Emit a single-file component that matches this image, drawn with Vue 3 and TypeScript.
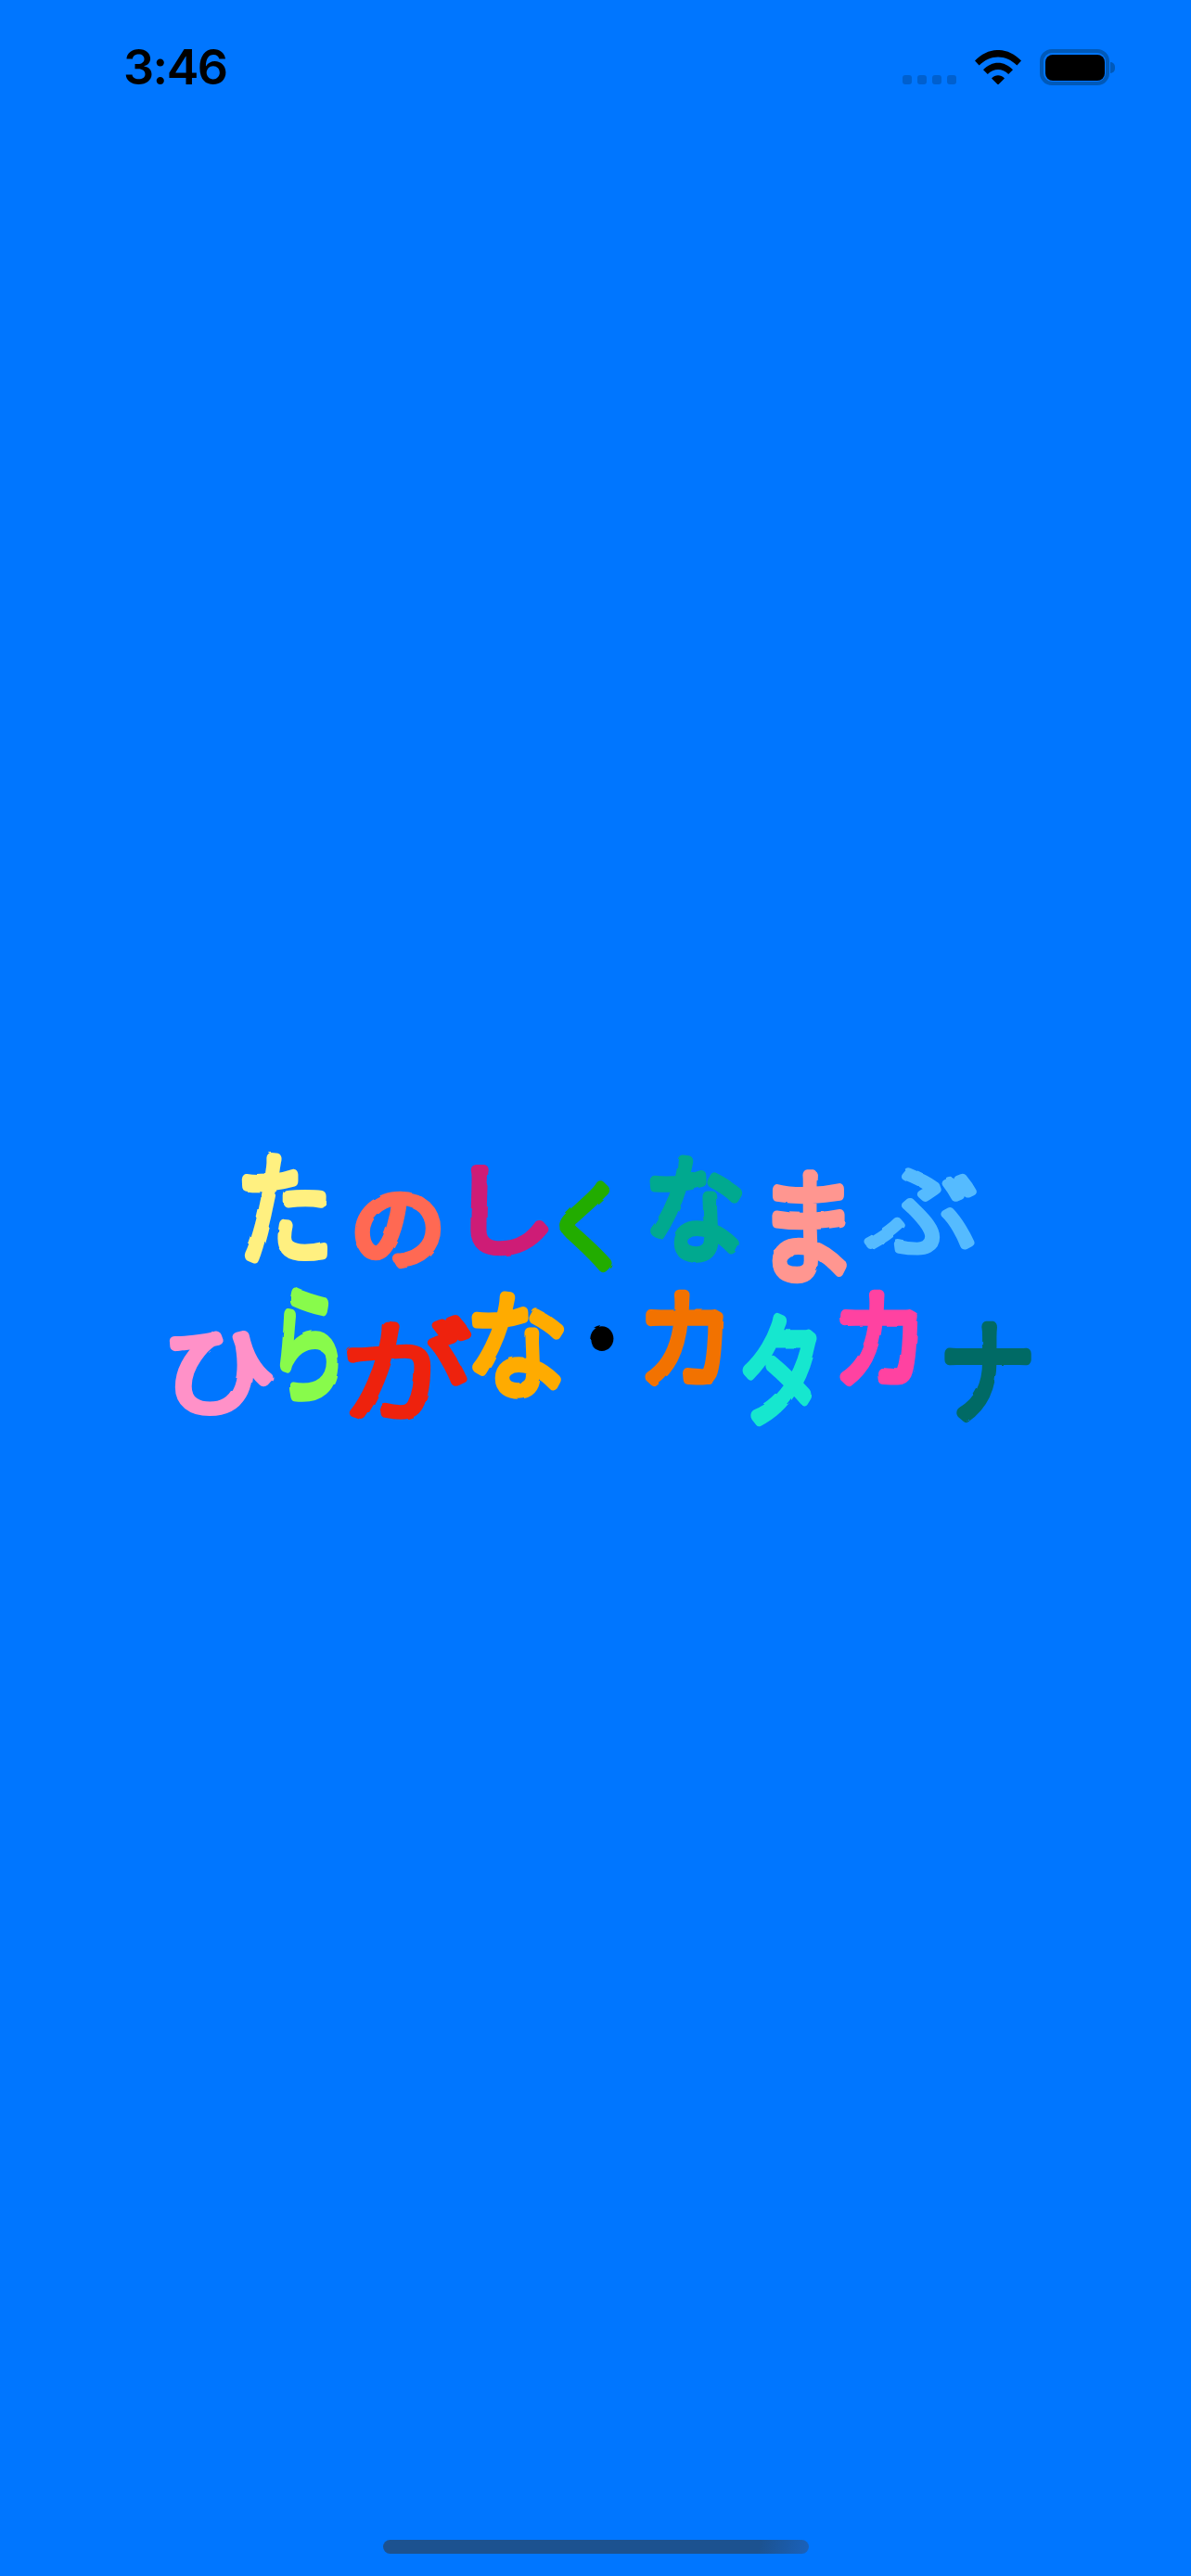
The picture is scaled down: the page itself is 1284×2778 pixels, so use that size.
<script setup lang="ts">
interface Glyph { ch: string; color: string; x0: number; x1: number; y0: number; y1: number; ix?: number; iy?: number; sw?: number }
const line1: Glyph[] = [
  { ch: 'た', color: '#FFF080', x0: 256, x1: 357, y0: 1242, y1: 1366 },
  { ch: 'の', color: '#FF6952', x0: 380, x1: 478, y0: 1280, y1: 1366, ix: 0.84, iy: 0.76 },
  { ch: 'し', color: '#CE1C76', x0: 500, x1: 583, y0: 1252, y1: 1356, ix: 0.62 },
  { ch: 'く', color: '#22AC00', x0: 605, x1: 664, y0: 1272, y1: 1373, ix: 0.5 },
  { ch: 'な', color: '#00A98F', x0: 696, x1: 802, y0: 1244, y1: 1363 },
  { ch: 'ま', color: '#FF9690', x0: 825, x1: 915, y0: 1260, y1: 1387, ix: 0.74 },
  { ch: 'ぶ', color: '#55BBFF', x0: 936, x1: 1052, y0: 1252, y1: 1358, sw: 8 },
]
const line2: Glyph[] = [
  { ch: 'ひ', color: '#FF91C8', x0: 174, x1: 296, y0: 1433, y1: 1523, ix: 0.9, iy: 0.74 },
  { ch: 'ら', color: '#88FB4B', x0: 300, x1: 364, y0: 1386, y1: 1515, ix: 0.62 },
  { ch: 'が', color: '#EE220C', x0: 373, x1: 503, y0: 1421, y1: 1536, sw: 8 },
  { ch: 'な', color: '#FFAB01', x0: 504, x1: 610, y0: 1391, y1: 1510 },
  { ch: '・', color: '#000000', x0: 636, x1: 662, y0: 1431, y1: 1458, ix: 0.105, iy: 0.105, sw: 0 },
  { ch: 'カ', color: '#F27200', x0: 693, x1: 785, y0: 1388, y1: 1500, ix: 0.78 },
  { ch: 'タ', color: '#16E7CF', x0: 801, x1: 883, y0: 1417, y1: 1541, ix: 0.74 },
  { ch: 'カ', color: '#FF42A1', x0: 903, x1: 995, y0: 1388, y1: 1500, ix: 0.78 },
  { ch: 'ナ', color: '#006B65', x0: 1016, x1: 1112, y0: 1420, y1: 1537, ix: 0.82 },
]
const STROKE = 12
const FONT = 100
const glyphs = [...line1, ...line2].map((g) => {
  const ix = g.ix ?? 0.86
  const iy = g.iy ?? 0.86
  const sx = (g.x1 - g.x0 - STROKE) / (ix * FONT)
  const sy = (g.y1 - g.y0 - STROKE) / (iy * FONT)
  const cx = (g.x0 + g.x1) / 2
  const cy = (g.y0 + g.y1) / 2
  const scale = (sx + sy) / 2
  return {
    ...g,
    transform: `translate(${cx} ${cy}) scale(${sx.toFixed(3)} ${sy.toFixed(3)})`,
    strokeWidth: (g.sw ?? 11 / scale).toFixed(1),
  }
})
</script>

<template>
  <div class="screen">
    <header class="status">
      <span class="time">3:46</span>
      <div class="indicators">
        <div class="signal">
          <i class="dot"></i><i class="dot"></i><i class="dot"></i><i class="dot"></i>
        </div>
        <svg class="wifi" viewBox="0 0 50 37" width="50" height="37" aria-hidden="true">
          <path d="M0 11.6 C14.5 -3.9 35.5 -3.9 50 11.6 L45.4 16.6 C33.5 4.4 16.5 4.4 4.6 16.6 Z" />
          <path d="M9 21.2 C18.5 11.2 31.5 11.2 41 21.2 L36.2 26 C29.5 19.2 20.5 19.2 13.8 26 Z" />
          <path d="M18 30.6 C22.2 26.2 27.8 26.2 32 30.6 L25 37.5 Z" />
        </svg>
        <div class="battery">
          <div class="cell"><div class="level"></div></div>
          <div class="cap"></div>
        </div>
      </div>
    </header>
    <main class="splash">
      <svg class="logo" viewBox="162 1230 960 320" width="960" height="320" role="img">
        <defs>
          <filter id="wobble" x="0" y="0" width="100%" height="100%">
            <feTurbulence type="fractalNoise" baseFrequency="0.05" numOctaves="1" seed="4" result="noise" />
            <feDisplacementMap in="SourceGraphic" in2="noise" scale="3" />
          </filter>
        </defs>
        <g filter="url(#wobble)">
          <text
            v-for="(g, i) in glyphs"
            :key="i"
            class="glyph"
            :transform="g.transform"
            :fill="g.color"
            :stroke="g.color"
            :stroke-width="g.strokeWidth"
            y="38"
          >{{ g.ch }}</text>
        </g>
      </svg>
    </main>
    <footer class="home">
      <div class="home-bar"></div>
    </footer>
  </div>
</template>

<style>
html, body { margin: 0; padding: 0; background: #0076ff; }
</style>

<style scoped>
.screen {
  width: 1284px;
  height: 2778px;
  background: #0076ff;
  display: grid;
  grid-template-rows: 110px 1fr 110px;
  overflow: hidden;
}
.status {
  display: flex;
  justify-content: space-between;
  padding: 53px 82px 0 133px;
}
.time {
  font-family: Inter, "Liberation Sans", sans-serif;
  font-weight: 600;
  font-size: 52px;
  line-height: 40px;
  letter-spacing: -1.5px;
  color: #000;
}
.indicators {
  display: flex;
  align-items: flex-start;
}
.signal {
  display: flex;
  gap: 6px;
  margin-top: 28px;
  margin-right: 20px;
}
.dot {
  display: block;
  width: 10px;
  height: 10px;
  border-radius: 3px;
  background: #0060cf;
}
.wifi {
  display: block;
  margin-top: 1px;
  fill: #000;
}
.battery {
  display: flex;
  align-items: center;
  margin-left: 20px;
}
.cell {
  box-sizing: border-box;
  width: 75px;
  height: 39px;
  padding: 1.5px;
  border: 4px solid #0059b9;
  border-radius: 13px;
}
.level {
  width: 100%;
  height: 100%;
  background: #000;
  border-radius: 8px;
}
.cap {
  width: 5px;
  height: 12px;
  margin-left: 1px;
  background: #0059b9;
  border-radius: 0 6px 6px 0;
}
.splash {
  display: flex;
  align-items: center;
  justify-content: center;
  min-height: 0;
}
.logo {
  display: block;
  overflow: visible;
}
.glyph {
  font-family: "Noto Sans CJK JP", sans-serif;
  font-size: 100px;
  font-weight: 300;
  text-anchor: middle;
  stroke-linejoin: round;
  stroke-linecap: round;
}
.home {
  display: flex;
  justify-content: center;
  padding-top: 71px;
}
.home-bar {
  width: 459px;
  height: 15px;
  border-radius: 8px;
  background: linear-gradient(100deg, #1c5290 88%, #1a62bc 100%);
}
</style>
